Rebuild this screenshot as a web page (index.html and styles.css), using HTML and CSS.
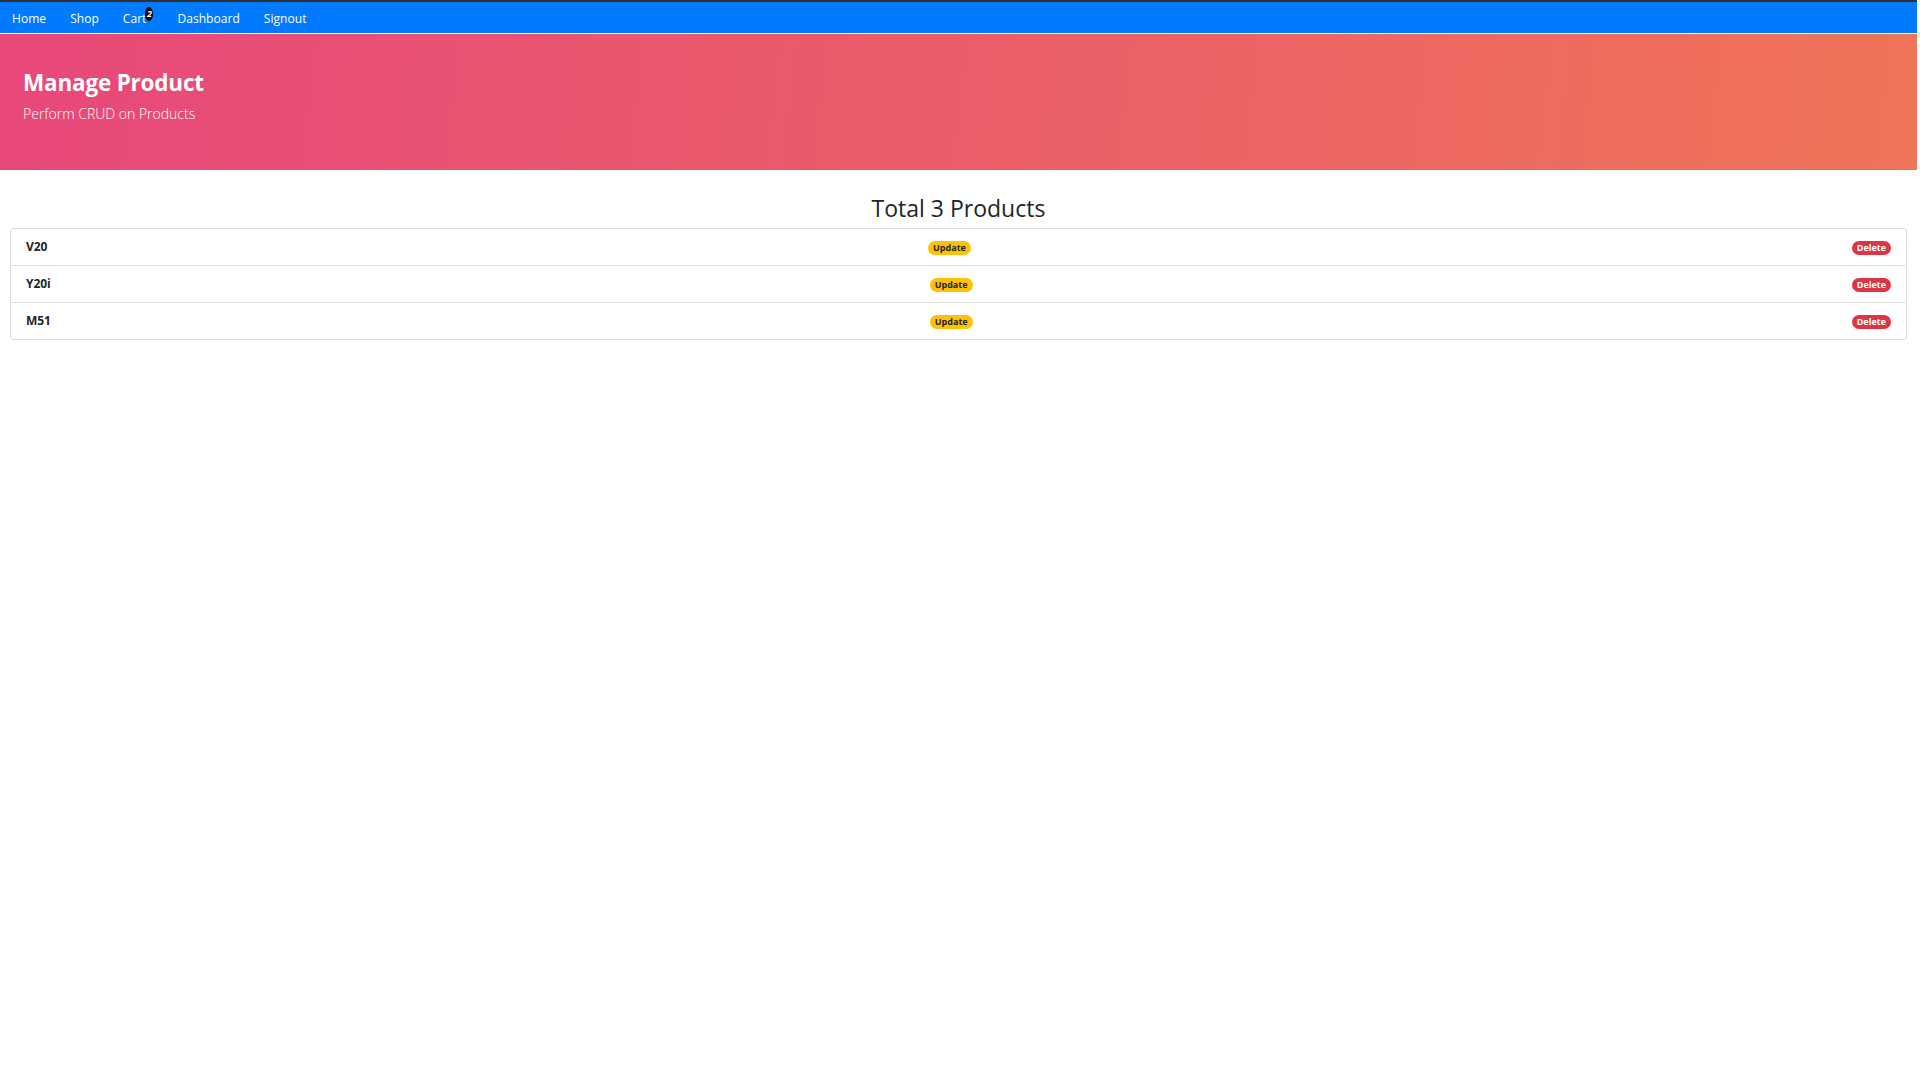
FILE: index.html
```html
<!DOCTYPE html>
<html lang="en">
<head>
<meta charset="utf-8">
<title>Manage Product</title>
<link rel="stylesheet" href="styles.css">
</head>
<body>
<div class="page">
  <nav class="topnav">
    <ul class="nav-list">
      <li><a class="nav-link" href="#">Home</a></li>
      <li><a class="nav-link" href="#">Shop</a></li>
      <li><a class="nav-link" href="#">Cart<span class="cart-badge">2</span></a></li>
      <li><a class="nav-link" href="#">Dashboard</a></li>
      <li><a class="nav-link" href="#">Signout</a></li>
    </ul>
  </nav>
  <header class="hero">
    <h2 class="hero-title">Manage Product</h2>
    <p class="hero-lead">Perform CRUD on Products</p>
  </header>
  <main class="content">
    <h2 class="total">Total 3 Products</h2>
    <ul class="list-group">
      <li class="list-item">
        <strong class="name">V20</strong>
        <span class="badge badge-warning">Update</span>
        <span class="badge badge-danger">Delete</span>
      </li>
      <li class="list-item">
        <strong class="name">Y20i</strong>
        <span class="badge badge-warning">Update</span>
        <span class="badge badge-danger">Delete</span>
      </li>
      <li class="list-item">
        <strong class="name">M51</strong>
        <span class="badge badge-warning">Update</span>
        <span class="badge badge-danger">Delete</span>
      </li>
    </ul>
  </main>
</div>
</body>
</html>
```
FILE: styles.css
```css
* { box-sizing: border-box; }
html, body { margin: 0; padding: 0; background: #fff; }
body {
  font-family: "Open Sans", "Noto Sans", sans-serif;
  font-size: 12px;
  line-height: 18px;
  color: #212529;
}
.page { margin-right: 3px; }

.topnav {
  background: #007bff;
  border-top: 2px solid #2f2f2f;
  border-bottom: 1px solid #f4f6f8;
}
.nav-list {
  list-style: none;
  margin: 0;
  padding: 0;
  display: flex;
}
.nav-link {
  display: block;
  padding: 8px 12px 5px;
  color: #fff;
  text-decoration: none;
  font-size: 12px;
  line-height: 18px;
  letter-spacing: 0.05px;
}
.cart-badge {
  display: inline-block;
  position: relative;
  top: -3px;
  margin-left: -1px;
  width: 8px;
  height: 14px;
  border-radius: 4px / 7px;
  background: #000;
  color: #fff;
  font-size: 9px;
  font-weight: 700;
  font-style: italic;
  line-height: 14px;
  text-align: center;
  vertical-align: top;
  letter-spacing: 0;
}

.hero {
  background: linear-gradient(97deg, #e8487a 0%, #eb5d69 50%, #ef7459 100%);
  padding: 34px 23px 33px;
  color: #fff;
}
.hero-title {
  margin: 0 0 6px;
  font-size: 22.5px;
  line-height: 29px;
  font-weight: 700;
  letter-spacing: -0.2px;
}
.hero-lead {
  margin: 0 0 12px;
  font-size: 14px;
  line-height: 22px;
  font-weight: 300;
}

.content { padding: 24px 10px 0; }
.total {
  margin: 0 0 5px;
  text-align: center;
  font-size: 23px;
  line-height: 29px;
  font-weight: 400;
}
.list-group {
  list-style: none;
  margin: 0;
  padding: 0;
  border: 1px solid #dfdfdf;
  border-radius: 3px;
}
.list-item {
  display: flex;
  justify-content: space-between;
  align-items: center;
  padding: 9px 15px;
  min-height: 36px;
}
.list-item + .list-item { border-top: 1px solid #dfdfdf; }
.name {
  font-weight: 700;
  font-size: 12px;
  line-height: 18px;
  letter-spacing: -0.1px;
}
.badge {
  display: inline-block;
  padding: 2px 5px;
  font-size: 9px;
  font-weight: 700;
  line-height: 10px;
  border-radius: 10px;
  white-space: nowrap;
  margin-top: 2px;
}
.badge-warning { background: #ffc107; color: #212529; }
.badge-danger { background: #dc3545; color: #fff; }
```
